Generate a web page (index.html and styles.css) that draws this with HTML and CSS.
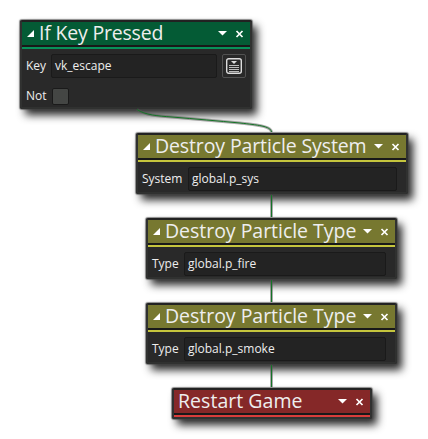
FILE: index.html
```
<!DOCTYPE html>
<html lang="en">
<head>
<meta charset="utf-8">
<title>Event actions</title>
<link rel="stylesheet" href="styles.css">
</head>
<body>
<main class="canvas">
  <section class="node key">
    <header><svg class="fold" viewBox="0 0 8 7"><path d="M7 0V7H0z"/></svg><h2>If Key Pressed</h2><svg class="tools" viewBox="0 0 26 8"><path d="M0 1H9L4.500 5.500z"/><path class="x" d="M18.500 1L24.500 7M24.500 1L18.500 7"/></svg></header>
    <div class="row"><label>Key</label><span class="field">vk_escape</span><span class="pick"><svg viewBox="0 0 18 18"><rect x="1.700" y="1.700" width="14.600" height="14.600" rx="2"/><path class="solid" d="M6 4H12L9 7z"/><path class="lines" d="M4 8.500H14M4 10.500H14M4 12.500H14M4 14.500H14"/></svg></span></div>
    <div class="row second"><label>Not</label><span class="check"></span></div>
  </section>
  <section class="node system olive">
    <header><svg class="fold" viewBox="0 0 8 7"><path d="M7 0V7H0z"/></svg><h2>Destroy Particle System</h2><svg class="tools" viewBox="0 0 26 8"><path d="M0 1H9L4.500 5.500z"/><path class="x" d="M18.500 1L24.500 7M24.500 1L18.500 7"/></svg></header>
    <div class="row"><label>System</label><span class="field">global.p_sys</span></div>
  </section>
  <section class="node fire olive">
    <header><svg class="fold" viewBox="0 0 8 7"><path d="M7 0V7H0z"/></svg><h2>Destroy Particle Type</h2><svg class="tools" viewBox="0 0 26 8"><path d="M0 1H9L4.500 5.500z"/><path class="x" d="M18.500 1L24.500 7M24.500 1L18.500 7"/></svg></header>
    <div class="row"><label>Type</label><span class="field">global.p_fire</span></div>
  </section>
  <section class="node smoke olive">
    <header><svg class="fold" viewBox="0 0 8 7"><path d="M7 0V7H0z"/></svg><h2>Destroy Particle Type</h2><svg class="tools" viewBox="0 0 26 8"><path d="M0 1H9L4.500 5.500z"/><path class="x" d="M18.500 1L24.500 7M24.500 1L18.500 7"/></svg></header>
    <div class="row"><label>Type</label><span class="field">global.p_smoke</span></div>
  </section>
  <section class="node restart">
    <header><h2>Restart Game</h2><svg class="tools" viewBox="0 0 26 8"><path d="M0 1H9L4.500 5.500z"/><path class="x" d="M18.500 1L24.500 7M24.500 1L18.500 7"/></svg></header>
  </section>
  <svg class="wires" viewBox="0 0 428 439">
    <path class="glow" d="M137 109.500C145 115 158 116 172 117C196 119 218 121 240 123C257 125 271 126 271.500 132M271.500 195V217M271.500 280V302M271.500 365V387"/>
    <path class="wire" d="M137 109.500C145 115 158 116 172 117C196 119 218 121 240 123C257 125 271 126 271.500 132M271.500 195V217M271.500 280V302M271.500 365V387"/>
  </svg>
</main>
</body>
</html>
```
FILE: styles.css
```
* { box-sizing: border-box; }
body { margin: 0; background: #fff; }
.canvas {
  position: relative;
  width: 428px;
  height: 439px;
  overflow: hidden;
  font-family: "Open Sans", sans-serif;
  color: #eee;
}
.node {
  position: absolute;
  border: 2px solid #303130;
  border-top-color: #222;
  border-radius: 2px;
  background: #292929;
  box-shadow: 0 0 1px 1px rgba(70, 70, 70, .6), 5px 6px 8px 0 rgba(0, 0, 0, .85);
}
.key { left: 20px; top: 20px; width: 232px; height: 89px; --head: #045b35; --line: #07925a; }
.olive { --head: #777830; --line: #c5c53d; }
.system { left: 136px; top: 133px; width: 272px; height: 61px; }
.fire { left: 146px; top: 218px; width: 251px; height: 61px; }
.smoke { left: 146px; top: 303px; width: 251px; height: 61px; }
.restart { left: 172px; top: 388px; width: 200px; height: 31px; --head: #852828; --line: #d93d3b; }
header {
  display: flex;
  align-items: center;
  height: 23px;
  padding: 0 6px 0 5px;
  background: var(--head);
  box-shadow: 0 2px #191919, 0 4px var(--line);
}
.restart header { padding-left: 4px; }
h2 {
  margin: 0;
  padding-bottom: 2px;
  font-size: 19.5px;
  font-weight: 400;
  line-height: 21px;
  letter-spacing: -.03px;
  white-space: nowrap;
}
.key h2 { letter-spacing: -.2px; }
.system h2 { letter-spacing: -.12px; }
.restart h2 { letter-spacing: .04px; }
.fold { width: 8px; height: 7px; margin-right: 4px; flex: none; fill: #fff; }
.tools { width: 26px; height: 8px; margin-left: auto; flex: none; fill: #fff; }
.x { fill: none; stroke: #fff; stroke-width: 1.7; }
.row {
  display: flex;
  align-items: center;
  height: 24px;
  margin-top: 9px;
  padding-left: 4px;
  font-size: 12px;
  line-height: 24px;
}
.key .second { margin-top: 6px; }
label { flex: none; width: 25px; }
.system label { width: 46px; }
.fire label, .smoke label { width: 32px; }
.field {
  width: 166px;
  height: 24px;
  padding-left: 3px;
  border: 1px solid #1a1a1a;
  border-radius: 2px;
  background: #232323;
  line-height: 21px;
}
.system .field { width: 209px; }
.fire .field, .smoke .field { width: 202px; }
.pick {
  width: 24px;
  height: 24px;
  margin-left: 5px;
  padding: 2px;
  border: 1px solid #525252;
  border-radius: 2px;
}
.pick svg { display: block; width: 18px; height: 18px; fill: none; stroke: #ddd; stroke-width: 1.4; }
.pick .solid { fill: #ddd; stroke: none; }
.pick .lines { stroke: #bbb; stroke-width: 1; }
.check {
  width: 17px;
  height: 17px;
  margin-left: 1px;
  border: 1px solid #1a1a1a;
  border-radius: 2px;
  background: #444644;
}
.wires { position: absolute; inset: 0; width: 428px; height: 439px; fill: none; pointer-events: none; }
.glow { stroke: #555; stroke-opacity: .5; stroke-width: 3; }
.wire { stroke: #147326; stroke-width: 1; }
```
